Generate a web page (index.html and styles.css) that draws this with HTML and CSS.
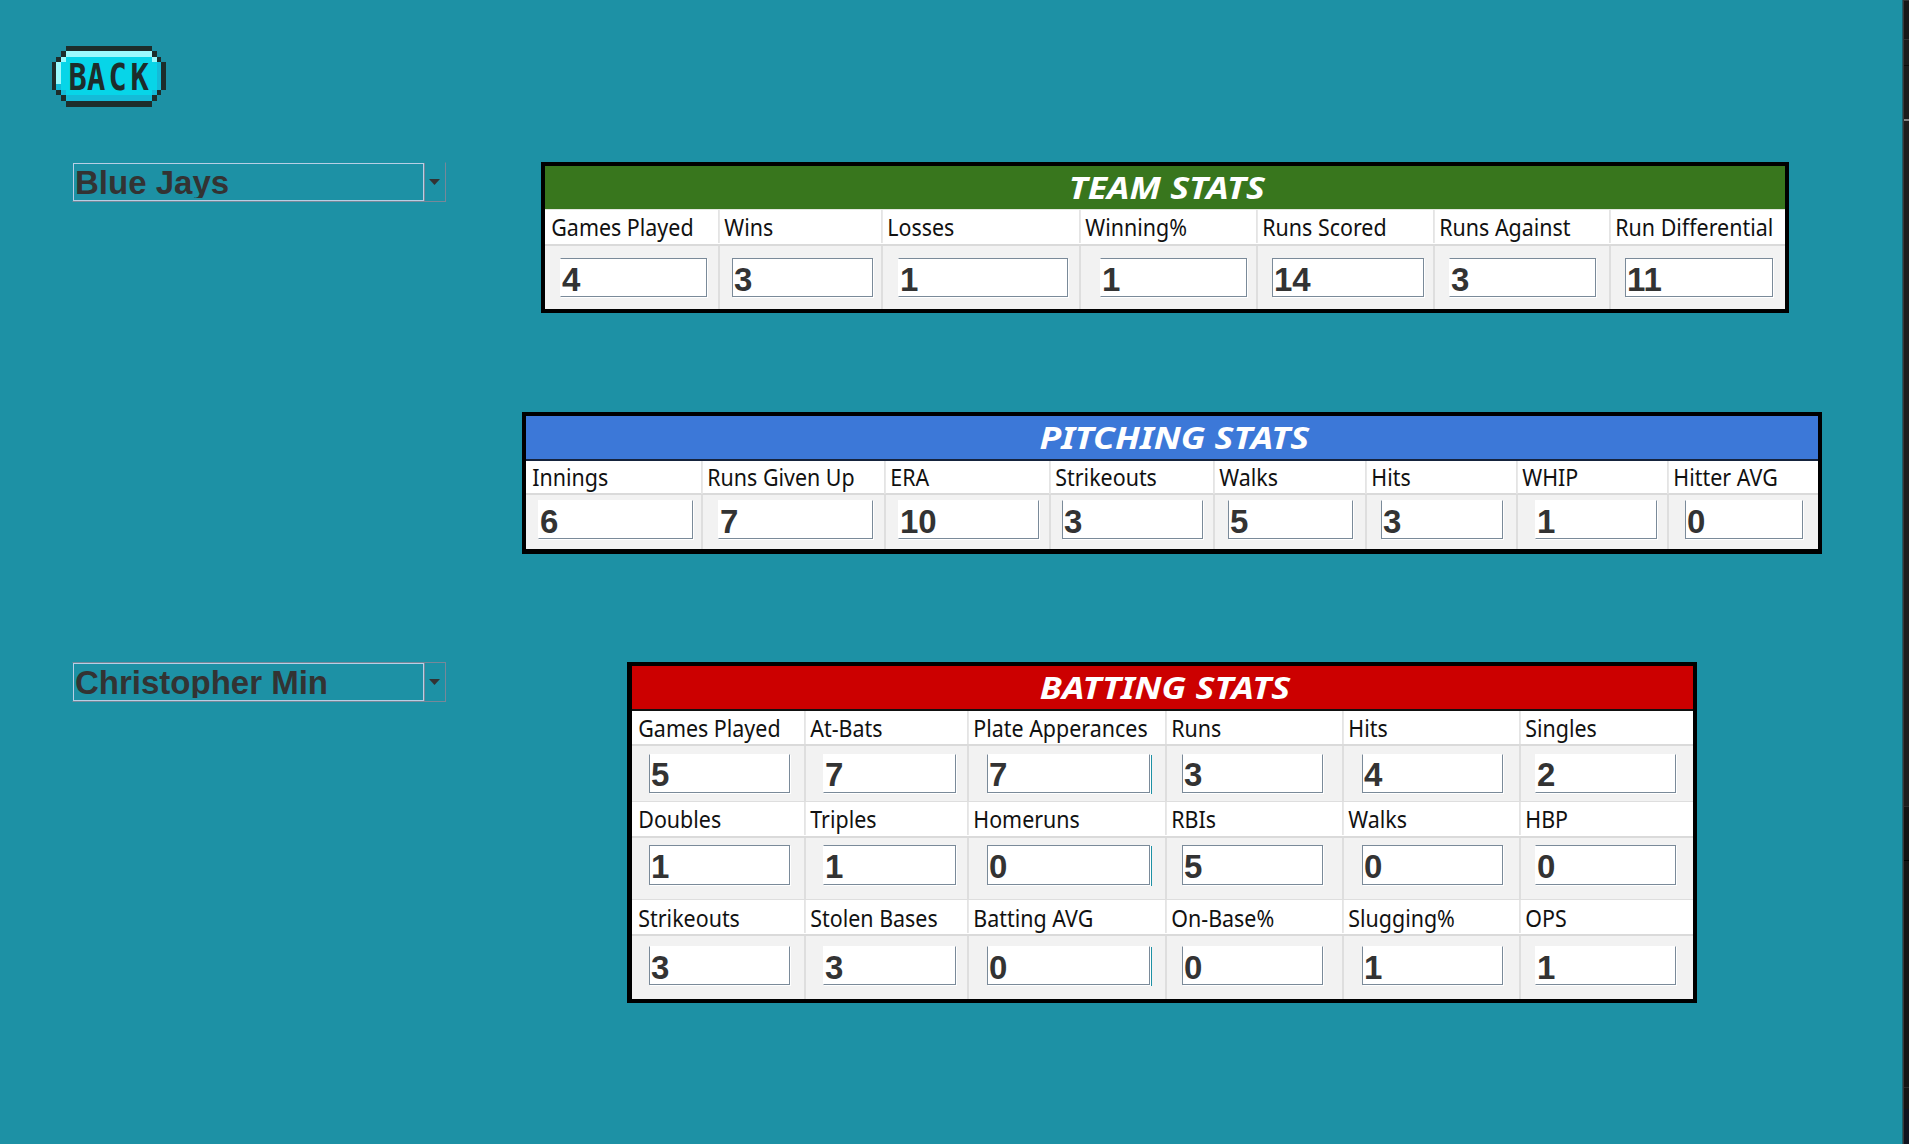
FILE: index.html
```
<!DOCTYPE html>
<html lang="en">
<head>
<meta charset="utf-8">
<title>Team Stats</title>
<link rel="stylesheet" href="styles.css">
</head>
<body>
<div class="page">
  <main class="main">
    <header class="top">
      <button class="back" aria-label="Back">
        <svg width="118" height="64" viewBox="30 24 354 192" shape-rendering="crispEdges">
          <path fill="#07d5e8" d="M77 45H335V62H350V77H364V161H350V177H335V194H77V177H64V161H48V77H64V62H77Z"/>
          <path fill="#9cfafd" d="M77 45H335V62H77ZM64 62H77V77H64ZM335 62H350V77H335ZM48 77H64V145H48Z"/>
          <path fill="#14bbd8" d="M77 177H335V194H77ZM64 161H77V177H64ZM48 145H64V161H48ZM350 77H364V161H350ZM335 161H350V177H335Z"/>
          <path fill="#1d2d2b" d="M77 30H335V45H77ZM64 45H77V62H64ZM48 62H64V77H48ZM35 77H48V161H35ZM48 161H64V177H48ZM64 177H77V194H64ZM77 194H335V212H77ZM335 45H350V62H335ZM350 62H364V77H350ZM364 77H379V161H364ZM350 161H364V177H350ZM335 177H350V194H335Z"/>
          <text class="back-text" transform="scale(.8 1)" x="141 211 291 374" y="161">BACK</text>
        </svg>
      </button>
    </header>

    <section class="row">
      <div class="side">
        <div class="combo combo-open"><span class="combo-value">Blue Jays</span><span class="combo-arrow"></span></div>
      </div>
      <div class="panel team">
        <h2 class="title"><span>TEAM STATS</span></h2>
        <div class="labels"><span>Games Played</span><span>Wins</span><span>Losses</span><span>Winning%</span><span>Runs Scored</span><span>Runs Against</span><span>Run Differential</span></div>
        <div class="values"><div><b>4</b></div><div><b>3</b></div><div><b>1</b></div><div><b>1</b></div><div><b>14</b></div><div><b>3</b></div><div><b>11</b></div></div>
      </div>
    </section>

    <section class="row">
      <div class="side"></div>
      <div class="panel pitching">
        <h2 class="title"><span>PITCHING STATS</span></h2>
        <div class="labels"><span>Innings</span><span>Runs Given Up</span><span>ERA</span><span>Strikeouts</span><span>Walks</span><span>Hits</span><span>WHIP</span><span>Hitter AVG</span></div>
        <div class="values"><div><b>6</b></div><div><b>7</b></div><div><b>10</b></div><div><b>3</b></div><div><b>5</b></div><div><b>3</b></div><div><b>1</b></div><div><b>0</b></div></div>
      </div>
    </section>

    <section class="row">
      <div class="side">
        <div class="combo"><span class="combo-value">Christopher Min</span><span class="combo-arrow"></span></div>
      </div>
      <div class="panel batting">
        <h2 class="title"><span>BATTING STATS</span></h2>
        <div class="labels"><span>Games Played</span><span>At-Bats</span><span>Plate Apperances</span><span>Runs</span><span>Hits</span><span>Singles</span></div>
        <div class="values first"><div><b>5</b></div><div><b>7</b></div><div><b>7</b></div><div><b>3</b></div><div><b>4</b></div><div><b>2</b></div></div>
        <div class="labels mid"><span>Doubles</span><span>Triples</span><span>Homeruns</span><span>RBIs</span><span>Walks</span><span>HBP</span></div>
        <div class="values second"><div><b>1</b></div><div><b>1</b></div><div><b>0</b></div><div><b>5</b></div><div><b>0</b></div><div><b>0</b></div></div>
        <div class="labels last"><span>Strikeouts</span><span>Stolen Bases</span><span>Batting AVG</span><span>On-Base%</span><span>Slugging%</span><span>OPS</span></div>
        <div class="values third"><div><b>3</b></div><div><b>3</b></div><div><b>0</b></div><div><b>0</b></div><div><b>1</b></div><div><b>1</b></div></div>
      </div>
    </section>
  </main>
  <aside class="edge"></aside>
</div>
</body>
</html>
```

FILE: styles.css
```
* { box-sizing: border-box; }
body { margin: 0; }

.page {
  display: flex;
  height: 1144px;
  overflow: hidden;
  background: #1d91a5;
}
.main {
  flex: 1;
  display: grid;
  grid-template-rows: 162px 250px 250px 1fr;
}
.edge {
  width: 7px;
  border-left: 1px solid #1c5d68;
  background:
    linear-gradient(90deg, #383838 1px, transparent 1px),
    linear-gradient(#333 0 1px, #181818 1px 39px, #333 39px 40px, #1c1c1c 40px 65px, #0c0c0c 65px 66px, #1c1c1c 66px 119px, #858585 119px 121px, #1e1e1e 121px 806px, #2c2c2c 806px 807px, #131313 807px 860px, #000 860px 861px, #151515 861px 1087px, #2c2c2c 1087px 1088px, #151515 1088px 1109px, #10131f 1109px);
}

.top { padding: 44px 0 0 50px; }
.back { display: block; padding: 0; border: 0; background: none; }
.back svg { display: block; }
.back-text { font: bold 114px "DejaVu Sans Mono", monospace; fill: #1d2d2b; text-anchor: middle; }

.row { display: flex; align-items: flex-start; }
.side { width: 522px; padding-left: 72px; flex: none; }

.combo {
  display: flex;
  width: 374px;
  height: 40px;
  border: 1px solid #778899;
  border-left-color: transparent;
}
.combo-open { border-top-color: transparent; }
.combo-value {
  width: 351px;
  height: 38px;
  border: 1px solid #b8cfe5;
  padding: 0 0 2px 1px;
  font: bold 33px/38px "Liberation Sans", Arial, sans-serif;
  color: #333;
  white-space: nowrap;
  overflow: clip;
  overflow-clip-margin: content-box;
}
.combo-arrow { flex: 1; border-left: 1px solid #778899; padding: 16px 0 0 4px; }
.combo-arrow::before {
  content: "";
  display: block;
  width: 11px;
  height: 6px;
  background: #333;
  clip-path: polygon(0 0, 100% 0, 50% 100%);
}

.panel { border: 4px solid #000; background: #f2f2f2; }
.title {
  height: 43px;
  margin: 0;
  padding-left: 4px;
  text-align: center;
  font: italic bold 30.5px/43px "Noto Sans", Tahoma, sans-serif;
  color: #fff;
}
.title span { display: inline-block; transform: scaleX(1.17); }

.labels, .values { display: grid; }
.labels {
  height: 35px;
  background: #fff;
  border-bottom: 2px solid #dadada;
  font: 24px/33px "Noto Sans", Tahoma, sans-serif;
  color: #111;
}
.labels span {
  position: relative;
  padding-left: 7px;
  white-space: nowrap;
  transform: scaleX(.893);
  transform-origin: 0 0;
}
.values > div { padding-top: 7px; }
.values > div + div { border-left: 2px solid #dedede; }
.labels span + span::before {
  content: "";
  position: absolute;
  left: 0;
  top: 0;
  width: 2px;
  height: 33px;
  background: #e4e4e4;
}
.values b {
  display: block;
  height: 39px;
  padding-left: 1px;
  border: 1px solid #7a8a99;
  border-top-color: #fff;
  background: #fff;
  box-shadow: 1px 1px #fff;
  font: bold 33px/41px "Liberation Sans", Arial, sans-serif;
  color: #333;
}

/* team */
.team { width: 1248px; height: 151px; margin-left: 19px; }
.team .title { background: #38761d; }
.team .labels, .team .values { grid-template-columns: 173px 163px 198px 177px 177px 176px 175px; }
.team .labels { height: 37px; border-top: 1px solid #e3e8df; }
.team .values { height: 63px; }
.team .values > div { padding-top: 12px; }
.team .values b { border-top-color: #7a8a99; }
.team div:nth-child(1) > b { margin-left: 15px; width: 147px; border-left-color: #fff; }
.team div:nth-child(2) > b { margin-left: 12px; width: 141px; }
.team div:nth-child(3) > b { margin-left: 15px; width: 170px; border-left-color: #fff; }
.team div:nth-child(4) > b { margin-left: 19px; width: 147px; border-left-color: #fff; }
.team div:nth-child(5) > b { margin-left: 14px; width: 152px; }
.team div:nth-child(6) > b { margin-left: 14px; width: 147px; border-left-color: #fff; }
.team div:nth-child(7) > b { margin-left: 14px; width: 148px; }

/* pitching */
.pitching { width: 1300px; height: 142px; border-bottom-width: 5px; }
.pitching .title { background: #3c78d8; }
.pitching .labels, .pitching .values { grid-template-columns: 175px 183px 165px 164px 152px 151px 151px 151px; }
.pitching .labels { height: 36px; border-top: 2px solid #15233d; line-height: 32px; }
.pitching .values { height: 54px; }
.pitching .values > div { padding-top: 5px; }
.pitching div:nth-child(1) > b { margin-left: 12px; width: 155px; border-left-color: #fff; }
.pitching div:nth-child(2) > b { margin-left: 15px; width: 155px; border-left-color: #fff; }
.pitching div:nth-child(3) > b { margin-left: 12px; width: 141px; border-left-color: #fff; }
.pitching div:nth-child(4) > b { margin-left: 11px; width: 141px; }
.pitching div:nth-child(5) > b { margin-left: 13px; width: 125px; }
.pitching div:nth-child(6) > b { margin-left: 14px; width: 122px; }
.pitching div:nth-child(7) > b { margin-left: 17px; width: 122px; border-left-color: #fff; }
.pitching div:nth-child(8) > b { margin-left: 16px; width: 118px; }

/* batting */
.batting { width: 1070px; height: 341px; margin-left: 105px; border-left-width: 5px; }
.batting .title { background: #c00; }
.batting .labels, .batting .values { grid-template-columns: 172px 163px 198px 177px 177px 174px; }
.batting .labels { height: 37px; border-top: 2px solid #111; }
.batting .labels.mid { border-top: 1px solid #dedede; line-height: 34px; }
.batting .labels.last { border-top: 1px solid #dedede; line-height: 35px; }
.batting .first { height: 55px; }
.batting .second { height: 61px; }
.batting .third { height: 63px; }
.batting .first > div { padding-top: 8px; }
.batting .second > div { padding-top: 7px; }
.batting .third > div { padding-top: 10px; }
.batting .first b { line-height: 40px; }
.batting .second b { height: 40px; border-top-color: #7a8a99; }
.batting div:nth-child(1) > b { margin-left: 17px; width: 141px; }
.batting div:nth-child(2) > b { margin-left: 17px; width: 133px; border-left-color: #fff; }
.batting div:nth-child(3) > b { margin-left: 18px; width: 163px; box-shadow: 1px 1px #fff, 2px 1px #1d91a5; }
.batting div:nth-child(4) > b { margin-left: 15px; width: 141px; }
.batting div:nth-child(5) > b { margin-left: 18px; width: 141px; }
.batting div:nth-child(6) > b { margin-left: 14px; width: 141px; border-left-color: #fff; }
```
